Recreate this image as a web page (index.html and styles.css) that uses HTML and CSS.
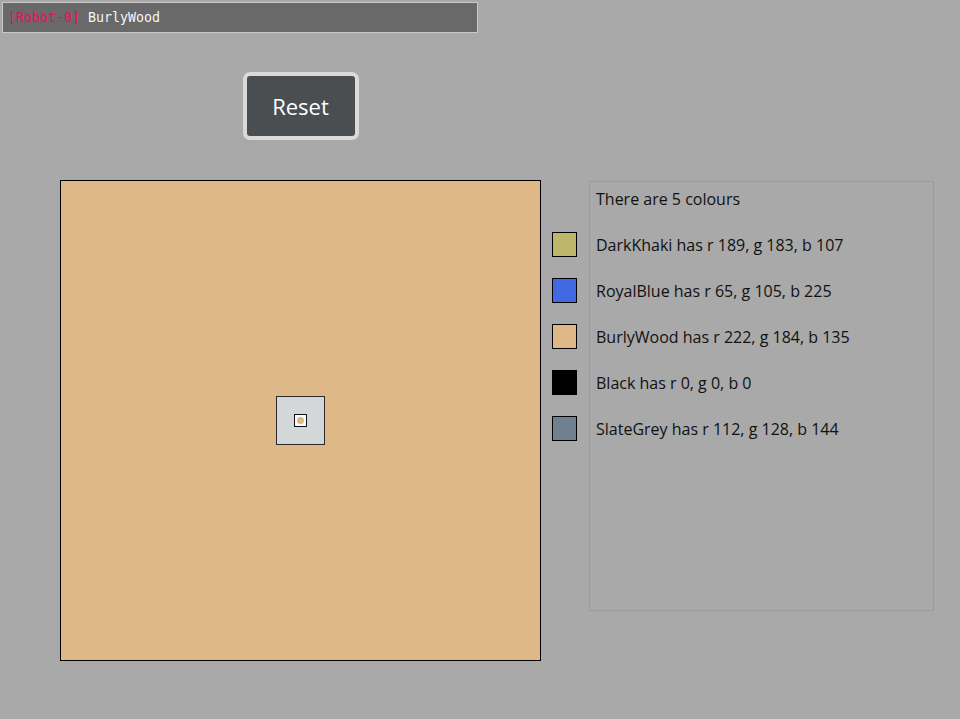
FILE: index.html
```html
<!DOCTYPE html>
<html>
<head>
<meta charset="utf-8">
<link rel="stylesheet" href="styles.css">
</head>
<body>
<div class="topbar"><span class="robot">[Robot-0]</span> <span class="name">BurlyWood</span></div>
<div class="controls">
  <button class="reset">Reset</button>
</div>
<div class="main">
  <div class="canvas">
    <div class="probe"><div class="probe-inner"><div class="dot"></div></div></div>
  </div>
  <div class="swatches">
    <div class="swatch-row"></div>
    <div class="swatch-row"><div class="swatch khaki"></div></div>
    <div class="swatch-row"><div class="swatch royal"></div></div>
    <div class="swatch-row"><div class="swatch burly"></div></div>
    <div class="swatch-row"><div class="swatch black"></div></div>
    <div class="swatch-row"><div class="swatch slate"></div></div>
  </div>
  <div class="panel">
    <div class="line">There are 5 colours</div>
    <div class="line">DarkKhaki has r 189, g 183, b 107</div>
    <div class="line">RoyalBlue has r 65, g 105, b 225</div>
    <div class="line">BurlyWood has r 222, g 184, b 135</div>
    <div class="line">Black has r 0, g 0, b 0</div>
    <div class="line">SlateGrey has r 112, g 128, b 144</div>
  </div>
</div>
</body>
</html>
```
FILE: styles.css
```css
html, body {
  margin: 0;
  padding: 0;
  background: #a9a9a9;
  width: 960px;
  height: 719px;
  overflow: hidden;
}
body {
  padding-top: 2px;
  padding-left: 2px;
  box-sizing: border-box;
}
.topbar {
  width: 476px;
  height: 31px;
  box-sizing: border-box;
  background: #696969;
  border: 1px solid #c8c8c8;
  font-family: "DejaVu Sans Mono", monospace;
  font-size: 13.3px;
  line-height: 29px;
  padding-left: 5px;
  color: #f0f0f0;
  white-space: pre;
}
.robot { color: #e0105e; }
.name { color: #f5f5f5; }
.controls {
  width: 481px;
  margin-left: 58px;
  margin-top: 39px;
  display: flex;
  justify-content: center;
}
.reset {
  width: 116px;
  height: 68px;
  box-sizing: border-box;
  background: #4a4e51;
  border: 4px solid #dadada;
  border-radius: 7px;
  color: #ffffff;
  font-family: "Open Sans", sans-serif;
  font-size: 22px;
  padding: 0;
}
.main {
  display: flex;
  margin-top: 40px;
  margin-left: 58px;
  align-items: flex-start;
}
.canvas {
  width: 481px;
  height: 481px;
  box-sizing: border-box;
  background: #deb887;
  border: 1px solid #000;
  display: flex;
  align-items: center;
  justify-content: center;
}
.probe {
  width: 49px;
  height: 49px;
  box-sizing: border-box;
  background: #d3d7d8;
  border: 1px solid #2a2a2a;
  display: flex;
  align-items: center;
  justify-content: center;
  margin-left: -1px;
  margin-top: -1px;
}
.probe-inner {
  width: 13px;
  height: 13px;
  box-sizing: border-box;
  background: #fafafa;
  border: 1px solid #111;
  display: flex;
  align-items: center;
  justify-content: center;
}
.dot {
  width: 7px;
  height: 7px;
  border-radius: 50%;
  background: #deb887;
}
.swatches {
  margin-left: 11px;
  width: 37px;
  padding-top: 9px;
}
.swatch-row {
  height: 46px;
  display: flex;
  align-items: center;
}
.swatch-row:first-child { height: 32px; }
.swatch {
  width: 25px;
  height: 25px;
  box-sizing: border-box;
  border: 1px solid #000;
}
.khaki { background: #bdb76b; }
.royal { background: #4169e1; }
.burly { background: #deb887; }
.black { background: #000; }
.slate { background: #708090; }
.panel {
  width: 345px;
  height: 430px;
  box-sizing: border-box;
  margin-top: 1px;
  border: 1px solid #9b9b9b;
  padding: 5px 0 0 6px;
  font-family: "Open Sans", sans-serif;
  font-size: 16px;
  color: #111;
}
.line {
  height: 46px;
  line-height: 24px;
}
```
